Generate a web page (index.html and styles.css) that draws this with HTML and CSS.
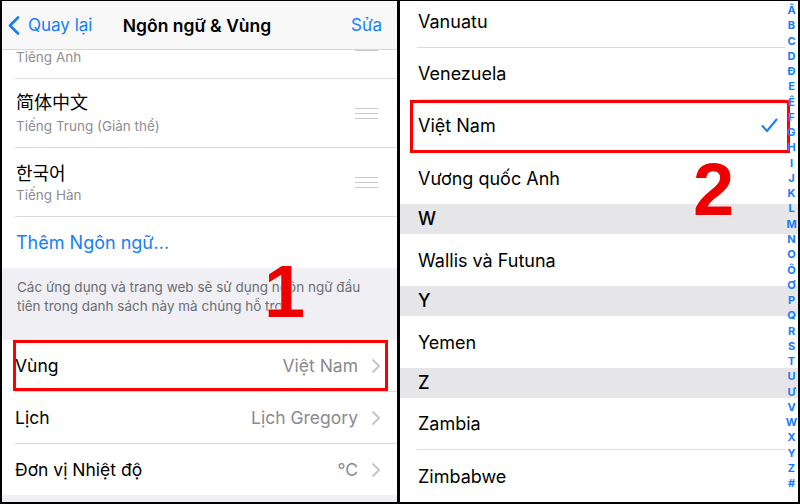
FILE: index.html
```html
<!DOCTYPE html>
<html lang="vi">
<head>
    <meta charset="UTF-8">
    <meta name="viewport" content="width=device-width, initial-scale=1.0">
    <title>Ngôn ngữ &amp; Vùng</title>
    <link rel="stylesheet" href="styles.css">
</head>
<body>
    <div class="frame">
        <section class="screen screen-left">
            <header class="navbar">
                <a class="nav-back">
                    <svg width="12" height="19" viewBox="0 0 12 19"><path d="M10 1.5 L2 9.5 L10 17.5" fill="none" stroke="#157efb" stroke-width="2.6" stroke-linecap="round" stroke-linejoin="round"/></svg>
                    Quay lại
                </a>
                <h1 class="nav-title">Ngôn ngữ &amp; Vùng</h1>
                <a class="nav-edit">Sửa</a>
            </header>
            <div class="scroll">
                <ul class="group">
                    <li class="lang lang-cut">
                        <div class="lang-sub">Tiếng Anh</div>
                        <span class="grip"></span>
                    </li>
                    <li class="lang">
                        <div>
                            <div class="lang-name" lang="zh-CN">简体中文</div>
                            <div class="lang-sub">Tiếng Trung (Giản thể)</div>
                        </div>
                        <span class="grip"></span>
                    </li>
                    <li class="lang">
                        <div>
                            <div class="lang-name" lang="ko">한국어</div>
                            <div class="lang-sub">Tiếng Hàn</div>
                        </div>
                        <span class="grip"></span>
                    </li>
                    <li class="add-lang">Thêm Ngôn ngữ...</li>
                </ul>
                <p class="footnote">Các ứng dụng và trang web sẽ sử dụng ngôn ngữ đầu tiên trong danh sách này mà chúng hỗ trợ.</p>
                <ul class="group">
                    <li class="setting marked">
                        <span class="setting-label">Vùng</span>
                        <span class="setting-value">Việt Nam</span>
                        <svg class="chev" width="8" height="14" viewBox="0 0 8 14"><path d="M1 1 L7 7 L1 13" fill="none" stroke="#c4c4c7" stroke-width="1.8" stroke-linecap="round" stroke-linejoin="round"/></svg>
                    </li>
                    <li class="setting">
                        <span class="setting-label">Lịch</span>
                        <span class="setting-value">Lịch Gregory</span>
                        <svg class="chev" width="8" height="14" viewBox="0 0 8 14"><path d="M1 1 L7 7 L1 13" fill="none" stroke="#c4c4c7" stroke-width="1.8" stroke-linecap="round" stroke-linejoin="round"/></svg>
                    </li>
                    <li class="setting">
                        <span class="setting-label">Đơn vị Nhiệt độ</span>
                        <span class="setting-value">°C</span>
                        <svg class="chev" width="8" height="14" viewBox="0 0 8 14"><path d="M1 1 L7 7 L1 13" fill="none" stroke="#c4c4c7" stroke-width="1.8" stroke-linecap="round" stroke-linejoin="round"/></svg>
                    </li>
                </ul>
            </div>
            <span class="step step-1">1</span>
        </section>

        <section class="screen screen-right">
            <ul class="countries">
                <li class="country">Vanuatu</li>
                <li class="country">Venezuela</li>
                <li class="country marked">
                    Việt Nam
                    <svg class="check" width="17" height="15" viewBox="0 0 17 15"><path d="M1.5 8 L6 13 L15.5 1.5" fill="none" stroke="#157efb" stroke-width="2" stroke-linecap="round" stroke-linejoin="round"/></svg>
                </li>
                <li class="country last">Vương quốc Anh</li>
                <li class="section-head">W</li>
                <li class="country last">Wallis và Futuna</li>
                <li class="section-head">Y</li>
                <li class="country last">Yemen</li>
                <li class="section-head">Z</li>
                <li class="country">Zambia</li>
                <li class="country last">Zimbabwe</li>
            </ul>
            <ol class="index">
                <li>Â</li><li>B</li><li>C</li><li>D</li><li>Đ</li><li>E</li><li>Ê</li><li>F</li>
                <li>G</li><li>H</li><li>I</li><li>J</li><li>K</li><li>L</li><li>M</li><li>N</li>
                <li>O</li><li>Ô</li><li>Ơ</li><li>P</li><li>Q</li><li>R</li><li>S</li><li>T</li>
                <li>U</li><li>Ư</li><li>V</li><li>W</li><li>X</li><li>Y</li><li>Z</li><li>#</li>
            </ol>
            <span class="step step-2">2</span>
        </section>
    </div>
</body>
</html>
```

FILE: styles.css
```css
body {
    margin: 0;
    background-color: #000;
    font-family: Inter, "Noto Sans CJK SC", sans-serif;
    color: #000;
}
ul, ol {
    list-style: none;
    margin: 0;
    padding: 0;
}
.frame {
    display: flex;
    gap: 3px;
    width: 800px;
    height: 504px;
    box-sizing: border-box;
    padding: 1px 2px 2px 2px;
}
.screen {
    position: relative;
    overflow: hidden;
    background-color: #fff;
}
.screen-left {
    width: 395px;
    display: flex;
    flex-direction: column;
    background-color: #efeff4;
}
.screen-right {
    flex: 1;
}

/* nav bar */
.navbar {
    position: relative;
    z-index: 2;
    display: grid;
    grid-template-columns: 1fr auto 1fr;
    align-items: center;
    height: 48px;
    flex-shrink: 0;
    background-color: #f8f8f8;
    border-bottom: 1px solid #d6d6d8;
    padding: 0 15px 0 6px;
    font-size: 17px;
}
.nav-back {
    display: flex;
    align-items: center;
    gap: 8px;
    color: #157efb;
}
.nav-title {
    margin: 0;
    text-align: center;
    font-size: 17.5px;
    font-weight: 600;
    padding-left: 4px;
}
.nav-edit {
    justify-self: end;
    color: #157efb;
}

/* grouped lists */
.scroll {
    flex: 1;
    overflow: hidden;
}
.group {
    background-color: #fff;
    padding-left: 13px;
}
.lang {
    display: flex;
    align-items: center;
    justify-content: space-between;
    height: 68px;
    border-bottom: 1px solid #dcdcde;
    padding: 0 19px 0 1px;
}
.lang-cut {
    height: 28px;
    align-items: flex-start;
}
.lang-cut .lang-sub {
    margin-top: -2px;
}
.lang-cut .grip {
    margin-top: -10px;
}
.lang-name {
    font-size: 18px;
    line-height: 24px;
}
.lang-name:lang(ko) {
    font-family: "Noto Sans CJK KR", sans-serif;
}
.lang-sub {
    margin-top: 2px;
    font-size: 13.5px;
    line-height: 18px;
    color: #8e8e93;
}
.grip {
    width: 23px;
    height: 11px;
    border-top: 1px solid #c7c7cc;
    border-bottom: 1px solid #c7c7cc;
    background: linear-gradient(#c7c7cc, #c7c7cc) center / 100% 1px no-repeat;
    box-sizing: border-box;
}
.add-lang {
    height: 51px;
    line-height: 51px;
    padding-left: 1px;
    font-size: 18px;
    color: #157efb;
}
.footnote {
    margin: 0;
    padding: 10px 20px 24px 15px;
    font-size: 13.5px;
    line-height: 19px;
    color: #6d6d72;
}
.setting {
    position: relative;
    display: flex;
    align-items: center;
    height: 51px;
    border-bottom: 1px solid #dcdcde;
    padding: 0 17px 0 0;
    font-size: 17.5px;
}
.setting:last-child {
    border-bottom: none;
}
.setting-label {
    flex: 1;
}
.setting-value {
    color: #8a8a8e;
    margin-right: 14px;
}
.setting.marked::after {
    content: "";
    position: absolute;
    top: 0;
    bottom: 0;
    left: -2px;
    right: 9px;
    border: 3px solid #f00;
}

/* country list */
.countries {
    margin-top: -5px;
}
.country {
    position: relative;
    display: flex;
    align-items: center;
    justify-content: space-between;
    height: 51px;
    margin-left: 17px;
    margin-right: 13px;
    padding-left: 1px;
    border-bottom: 1px solid #dcdcde;
    font-size: 18px;
}
.country.last {
    height: 52px;
    border-bottom: none;
}
.country .check {
    margin-right: 7px;
}
.country.marked::after {
    content: "";
    position: absolute;
    top: 0;
    bottom: -2px;
    left: -7px;
    right: -5px;
    border: 3px solid #f00;
}
.section-head {
    height: 30px;
    line-height: 30px;
    padding-left: 18px;
    background-color: #e6e6e8;
    font-size: 18px;
    font-weight: 500;
}
.index {
    position: absolute;
    top: 2px;
    right: 0;
    width: 13px;
    text-align: center;
    font-size: 11px;
    font-weight: 700;
    line-height: 15.26px;
    color: #157efb;
}

/* annotation numbers */
.step {
    position: absolute;
    z-index: 3;
    font-family: "Liberation Sans", Arial, sans-serif;
    font-weight: 700;
    font-size: 74px;
    line-height: 1;
    color: #ee0000;
    text-shadow: 0 0 2px #fff, 0 0 2px #fff;
}
.step-1 {
    left: 262px;
    top: 254px;
}
.step-2 {
    left: 293px;
    top: 152px;
}
```
